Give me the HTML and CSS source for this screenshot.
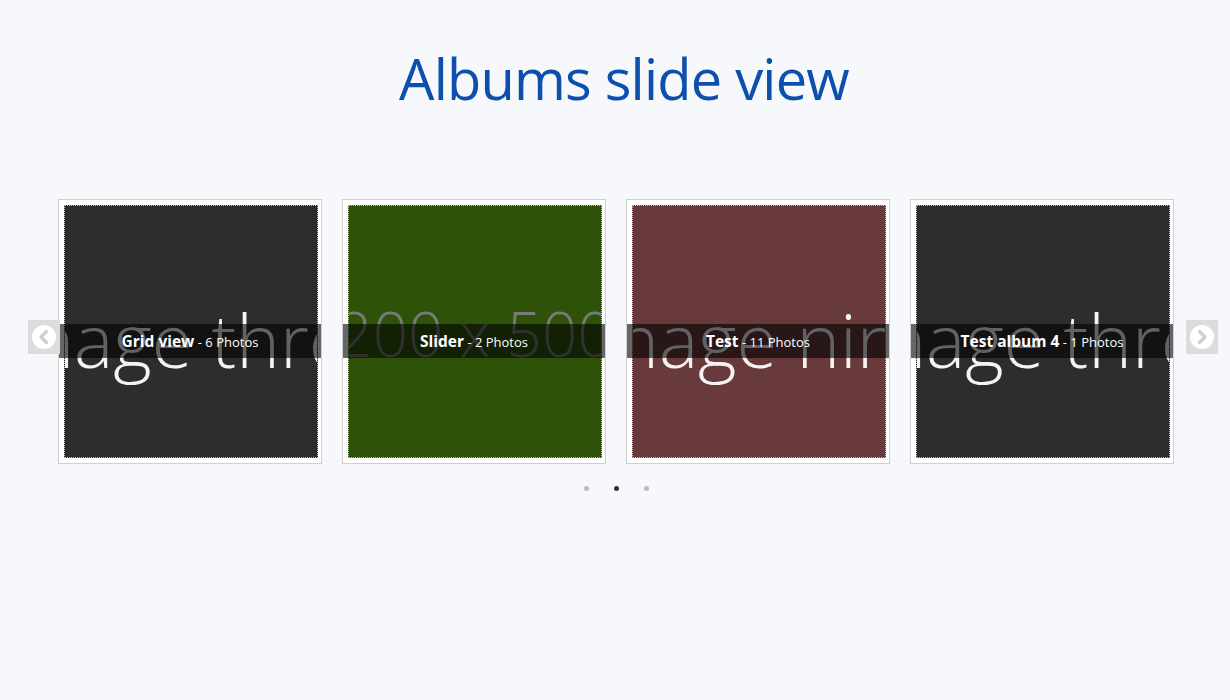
FILE: index.html
```html
<!DOCTYPE html>
<html>
<head>
<meta charset="utf-8">
<link rel="stylesheet" href="styles.css">
</head>
<body>
<h1 class="title">Albums slide view</h1>
<div class="carousel">
  <div class="track">
    <div class="card">
      <div class="img img-dark"><span class="ph">image three</span></div>
      <div class="caption"><b>Grid view</b> - 6 Photos</div>
    </div>
    <div class="card">
      <div class="img img-green"><span class="ph ph-grey">200 x 500</span></div>
      <div class="caption"><b>Slider</b> - 2 Photos</div>
    </div>
    <div class="card">
      <div class="img img-red"><span class="ph">image nine</span></div>
      <div class="caption"><b>Test</b> - 11 Photos</div>
    </div>
    <div class="card">
      <div class="img img-dark"><span class="ph">image three</span></div>
      <div class="caption"><b>Test album 4</b> - 1 Photos</div>
    </div>
  </div>
  <button class="arrow arrow-prev" aria-label="Previous">
    <svg width="26" height="26" viewBox="0 0 26 26"><circle cx="13" cy="13" r="12" fill="#fff"/><path d="M15.5 7.5 L10 13 L15.5 18.5" fill="none" stroke="#cfcfcf" stroke-width="3.2" stroke-linecap="round" stroke-linejoin="round"/></svg>
  </button>
  <button class="arrow arrow-next" aria-label="Next">
    <svg width="26" height="26" viewBox="0 0 26 26"><circle cx="13" cy="13" r="12" fill="#fff"/><path d="M10.5 7.5 L16 13 L10.5 18.5" fill="none" stroke="#cfcfcf" stroke-width="3.2" stroke-linecap="round" stroke-linejoin="round"/></svg>
  </button>
</div>
<div class="dots">
  <span class="dot"></span>
  <span class="dot active"></span>
  <span class="dot"></span>
</div>
</body>
</html>
```
FILE: styles.css
```css
html, body {
  margin: 0;
  padding: 0;
}
body {
  background: #f6f8fb;
  font-family: "Open Sans", "Liberation Sans", sans-serif;
  width: 1230px;
  height: 700px;
  overflow: hidden;
}
.title {
  margin: 0;
  padding-top: 40px;
  padding-left: 18px;
  text-align: center;
  font-family: "Open Sans", sans-serif;
  font-weight: 400;
  font-size: 56px;
  letter-spacing: -0.8px;
  line-height: 76px;
  color: #0d4fad;
}
.carousel {
  position: relative;
  width: 1116px;
  margin: 83px 0 0 58px;
}
.track {
  display: flex;
  gap: 20px;
}
.card {
  position: relative;
  width: 252px;
  height: 253px;
  padding: 5px;
  background: #fff;
  border: 1px solid #cfcfcf;
}
.img {
  position: relative;
  width: 254px;
  height: 253px;
  margin-right: -2px;
  box-sizing: border-box;
  border: 1px dotted #bdbdbd;
  overflow: hidden;
  display: flex;
  align-items: center;
  justify-content: center;
}
.img-dark { background: #2d2d2d; }
.img-green { background: #2d5208; }
.img-red { background: #683a3c; }
.ph {
  white-space: nowrap;
  font-family: "Open Sans", sans-serif;
  font-weight: 300;
  font-size: 74px;
  color: #f4f4f4;
  margin-top: 16px;
}
.ph-grey {
  color: #7a7a7a;
  font-size: 62px;
  margin-top: 2px;
}
.caption {
  position: absolute;
  left: 0;
  right: 0;
  top: 124px;
  height: 34px;
  line-height: 34px;
  background: rgba(0, 0, 0, 0.6);
  color: #fff;
  text-align: center;
  font-size: 13px;
}
.caption b {
  font-size: 15.5px;
  font-weight: 700;
}
.arrow {
  position: absolute;
  top: 121px;
  width: 32px;
  height: 34px;
  padding: 0;
  border: 0;
  background: #dcdcdc;
  display: flex;
  align-items: center;
  justify-content: center;
  cursor: pointer;
}
.arrow-prev { left: -30px; }
.arrow-next { right: -44px; }
.dots {
  display: flex;
  justify-content: center;
  gap: 25px;
  margin-top: 22px;
  padding-left: 2px;
}
.dot {
  width: 5px;
  height: 5px;
  border-radius: 50%;
  background: #bbbbbb;
}
.dot.active {
  background: #333;
}
```
